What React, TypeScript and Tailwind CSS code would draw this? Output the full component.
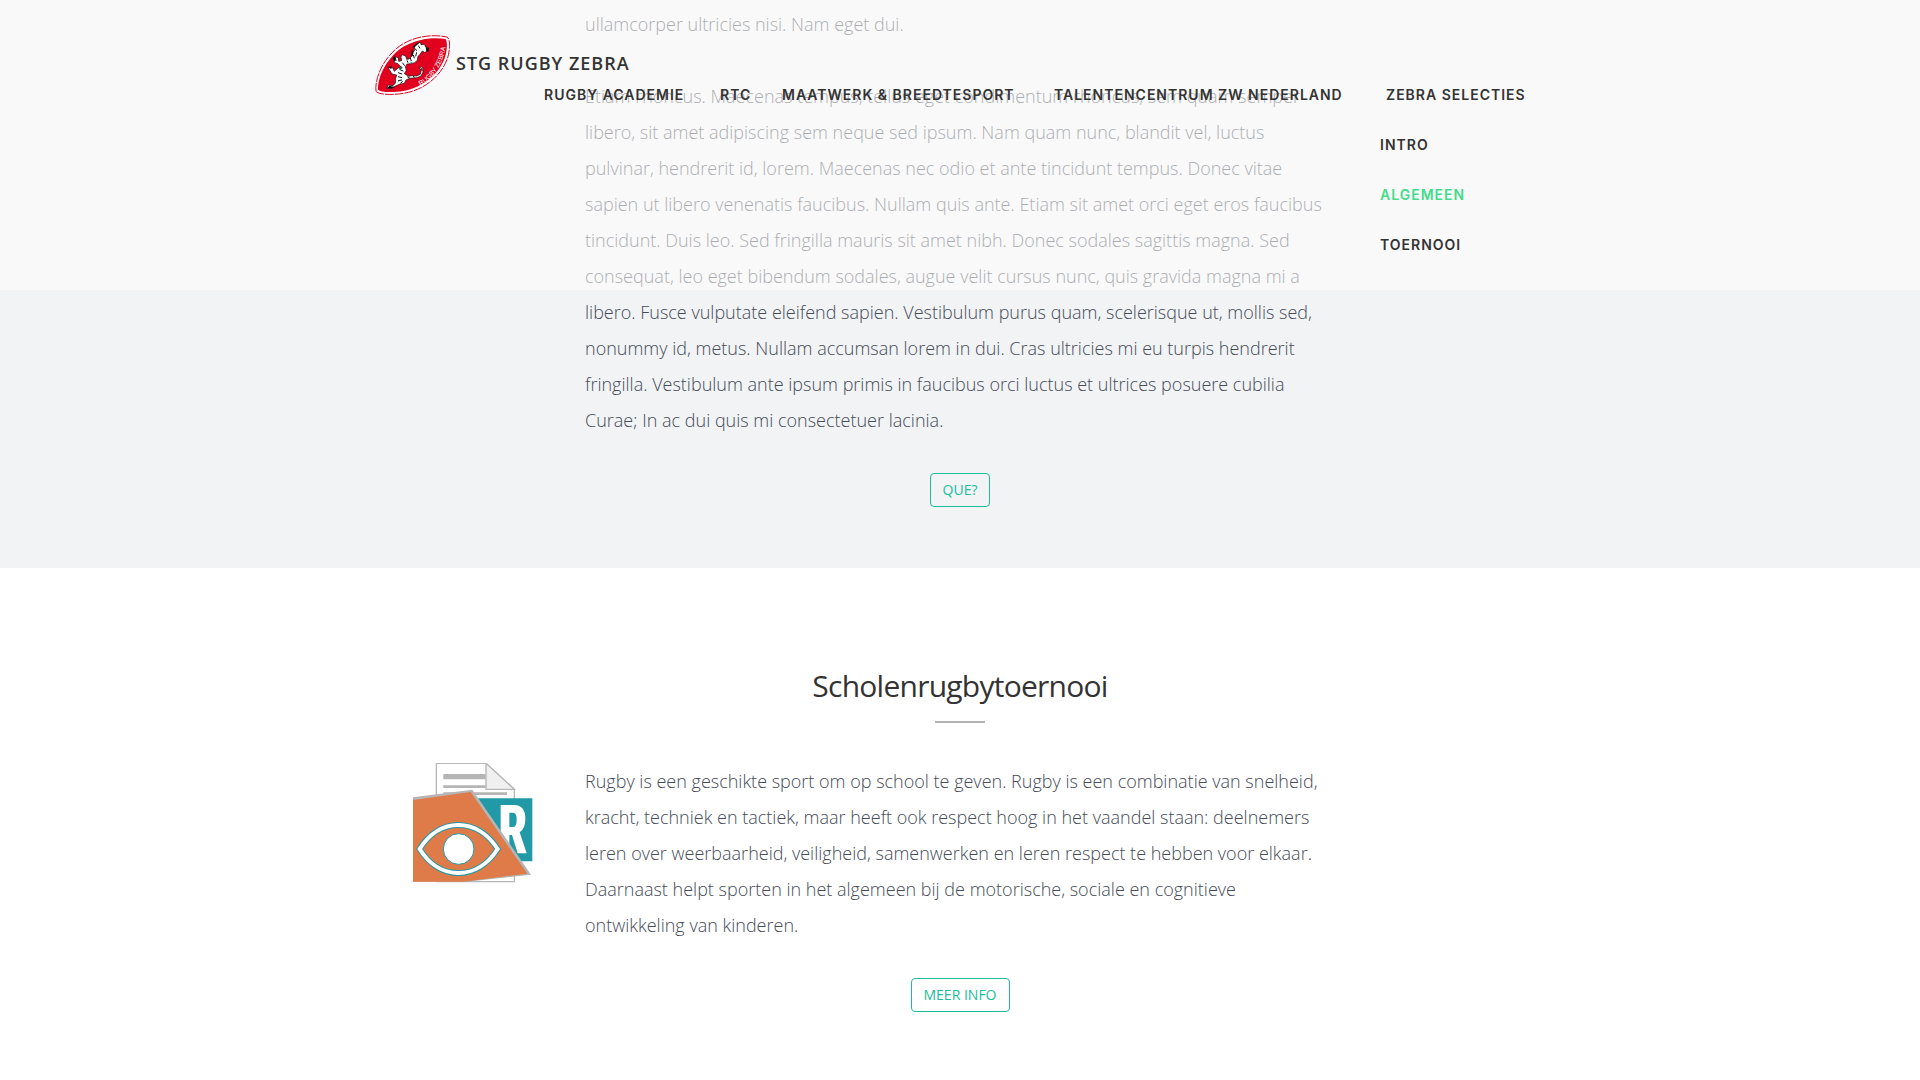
const navItems = [
  'Rugby Academie',
  'RTC',
  'Maatwerk & Breedtesport',
  'Talentencentrum ZW Nederland',
  'Zebra Selecties',
];

const subItems = [
  { label: 'Intro', active: false },
  { label: 'Algemeen', active: true },
  { label: 'Toernooi', active: false },
];

function ZebraLogo() {
  return (
    <svg className="h-[62px] w-[76px] shrink-0" viewBox="15 27 228 186" aria-hidden="true">
      <path
        d="M18 199C13 152 49 86 100 56C142 32 192 28 231 36C242 42 240 78 232 101C214 152 162 196 100 205C70 210 26 210 18 199Z"
        fill="#fff"
        stroke="#e2001f"
        strokeWidth="3"
        strokeDasharray="26 3"
      />
      <path
        d="M24 194C22 150 57 90 104 63C142 42 190 35 226 42C234 48 231 79 224 100C206 148 158 188 100 198C72 202 33 203 24 194Z"
        fill="#e2001f"
      />
      <path
        d="M133 66L143 54L151 51L153 59L164 58L166 65L175 68L175 78L164 82L157 78L150 88L144 94L142 106L134 113L122 116L111 117L106 125L109 136L103 146L116 154L126 152L140 153L151 148L154 136L149 130L153 124L158 128L159 141L153 153L141 158L119 160L108 165L103 175L88 178L75 184L61 191L51 190L54 180L69 182L76 174L77 160L80 150L66 147L60 137L55 130L62 125L68 128L73 139L84 129L93 126L84 116L74 113L70 101L77 95L85 99L86 109L95 107L93 96L96 89L107 93L110 103L117 102L126 93L125 83L133 78Z"
        fill="#fff"
        stroke="#111"
        strokeWidth="2"
      />
      <path
        d="M133 69l8 8M145 62l5 8M140 82l-3 12M130 90l3 10M121 99l3 9M111 106l3 7M97 113l7 9M90 134l10 4M84 143l12 4M84 155l12 3M84 167l12-2M91 175l7-6M76 98l2 10M112 155l7 4M130 153l3 5M152 127l5 10"
        stroke="#111"
        strokeWidth="3"
        fill="none"
      />
      <path
        d="M125 69l13-13 13-5-7 7-11 9zM126 72l5 10-3 12-5-3zM167 66l9 2v10l-7 2zM55 125l8-1 4 6-7 1zM68 99l6-5 4 4-4 12zM58 182l-7 8 13 1 10-5z"
        fill="#111"
      />
      <path d="M88 128l7-3 2 4-8 5zM119 110l7 3M84 169l8-3" fill="#176b50" stroke="#176b50" strokeWidth="2" />
      <path id="zebra-logo-text" d="M151 182C190 160 222 118 228 54" fill="none" />
      <text fill="#fff" className="font-['Liberation_Sans'] text-[20px]">
        <textPath href="#zebra-logo-text">RUGBY ZEBRA</textPath>
      </text>
    </svg>
  );
}

function DocumentIcon() {
  return (
    <svg className="h-[121px] w-[121px]" viewBox="36 39 363 363" aria-hidden="true">
      <path d="M109 40H258L343 118V395H109Z" fill="#fff" stroke="#b7b7b7" strokeWidth="4" />
      <path d="M258 40L343 118H258Z" fill="#f0f0f0" stroke="#b7b7b7" strokeWidth="4" />
      <path d="M130 80H257" stroke="#b5b5b5" strokeWidth="16" />
      <path d="M130 110H257M130 131H321" stroke="#b5b5b5" strokeWidth="8" />
      <path d="M215 145H397V334H345Z" fill="#2299a6" />
      <path
        fillRule="evenodd"
        d="M302 165H342Q376 165 376 207Q376 236 359 247L380 310H353L336 255H328V300L302 262ZM328 188V231H339Q350 231 350 209Q350 188 340 188Z"
        fill="#fff"
      />
      <path d="M39 142L217 119L393 374L200 395H39Z" fill="#b5b5b5" />
      <path d="M39 150L212 126L382 371L190 395H39Z" fill="#df7b48" />
      <path
        d="M59 297C88 250 130 225 175 225C220 225 263 250 293 297C263 344 220 369 175 369C130 369 88 344 59 297Z"
        fill="none"
        stroke="#2299a6"
        strokeWidth="18"
      />
      <path
        d="M59 297C88 250 130 225 175 225C220 225 263 250 293 297C263 344 220 369 175 369C130 369 88 344 59 297Z"
        fill="none"
        stroke="#fff"
        strokeWidth="12"
      />
      <circle cx="176" cy="297" r="46" fill="#fff" stroke="#2299a6" strokeWidth="3" />
    </svg>
  );
}

function Header() {
  return (
    <header className="absolute inset-x-0 top-0 z-10 bg-[#fffefc]/55">
      <div className="mx-auto w-full max-w-[1170px] pb-5 pt-[34px]">
        <a href="#top" className="flex h-9 w-max items-start gap-[5px] text-[#333]">
          <ZebraLogo />
          <span className="mt-[11px] text-lg/9 font-semibold uppercase tracking-[1px]">Stg Rugby Zebra</span>
        </a>
        <nav className="flex flex-col items-end font-[Inter,sans-serif] text-sm/[50px] font-semibold uppercase tracking-[1px] text-[#333]">
          <ul className="grid grid-cols-[146px_32px_242px_302px_144px] gap-[30px] whitespace-nowrap pr-[15px]">
            {navItems.map((item) => (
              <li key={item}>
                <a href="#nav">{item}</a>
              </li>
            ))}
          </ul>
          <ul className="w-[165px]">
            {subItems.map((item) => (
              <li key={item.label}>
                <a href="#section" className={item.active ? 'text-[#42dc8b]' : ''}>
                  {item.label}
                </a>
              </li>
            ))}
          </ul>
        </nav>
      </div>
    </header>
  );
}

function ActionButton({ label }: { label: string }) {
  return (
    <button
      type="button"
      className="mx-auto block rounded border border-[#1abc9c] px-3 py-1.5 text-sm/5 uppercase text-[#1abc9c]"
    >
      {label}
    </button>
  );
}

export default function App() {
  return (
    <div className="relative min-h-screen overflow-hidden bg-white font-['Open_Sans',sans-serif] text-[#464b58]">
      <Header />
      <section className="bg-[#f1f3f5] px-4 pb-[61px] pt-[6px]">
        <div className="mx-auto max-w-[750px]">
          <p className="mb-[35px] text-lg/9 font-light">
            ullamcorper ultricies nisi. Nam eget dui.
            <br />
            <br />
            Etiam rhoncus. Maecenas tempus, tellus eget condimentum rhoncus, sem quam semper libero, sit amet
            adipiscing sem neque sed ipsum. Nam quam nunc, blandit vel, luctus pulvinar, hendrerit id, lorem.
            Maecenas nec odio et ante tincidunt tempus. Donec vitae sapien ut libero venenatis faucibus. Nullam quis
            ante. Etiam sit amet orci eget eros faucibus tincidunt. Duis leo. Sed fringilla mauris sit amet nibh.
            Donec sodales sagittis magna. Sed consequat, leo eget bibendum sodales, augue velit cursus nunc, quis
            gravida magna mi a libero. Fusce vulputate eleifend sapien. Vestibulum purus quam, scelerisque ut, mollis
            sed, nonummy id, metus. Nullam accumsan lorem in dui. Cras ultricies mi eu turpis hendrerit fringilla.
            Vestibulum ante ipsum primis in faucibus orci luctus et ultrices posuere cubilia Curae; In ac dui quis mi
            consectetuer lacinia.
          </p>
          <ActionButton label="Que?" />
        </div>
      </section>
      <section className="pb-[61px] pt-[100px]">
        <h2 className="text-center text-[30px]/9 tracking-tight text-[#333]">Scholenrugbytoernooi</h2>
        <hr className="mx-auto mb-10 mt-[17px] w-[50px] border-t-2 border-[#b0b3b2]" />
        <div className="mx-auto grid max-w-[1170px] grid-cols-[195px_1fr_195px]">
          <div className="flex justify-center">
            <DocumentIcon />
          </div>
          <div className="px-[15px]">
            <p className="mb-[35px] text-lg/9 font-light">
              Rugby is een geschikte sport om op school te geven. Rugby is een combinatie van snelheid, kracht,
              techniek en tactiek, maar heeft ook respect hoog in het vaandel staan: deelnemers leren over
              weerbaarheid, veiligheid, samenwerken en leren respect te hebben voor elkaar. Daarnaast helpt sporten
              in het algemeen bij de motorische, sociale en cognitieve ontwikkeling van kinderen.
            </p>
            <ActionButton label="Meer info" />
          </div>
        </div>
      </section>
    </div>
  );
}
